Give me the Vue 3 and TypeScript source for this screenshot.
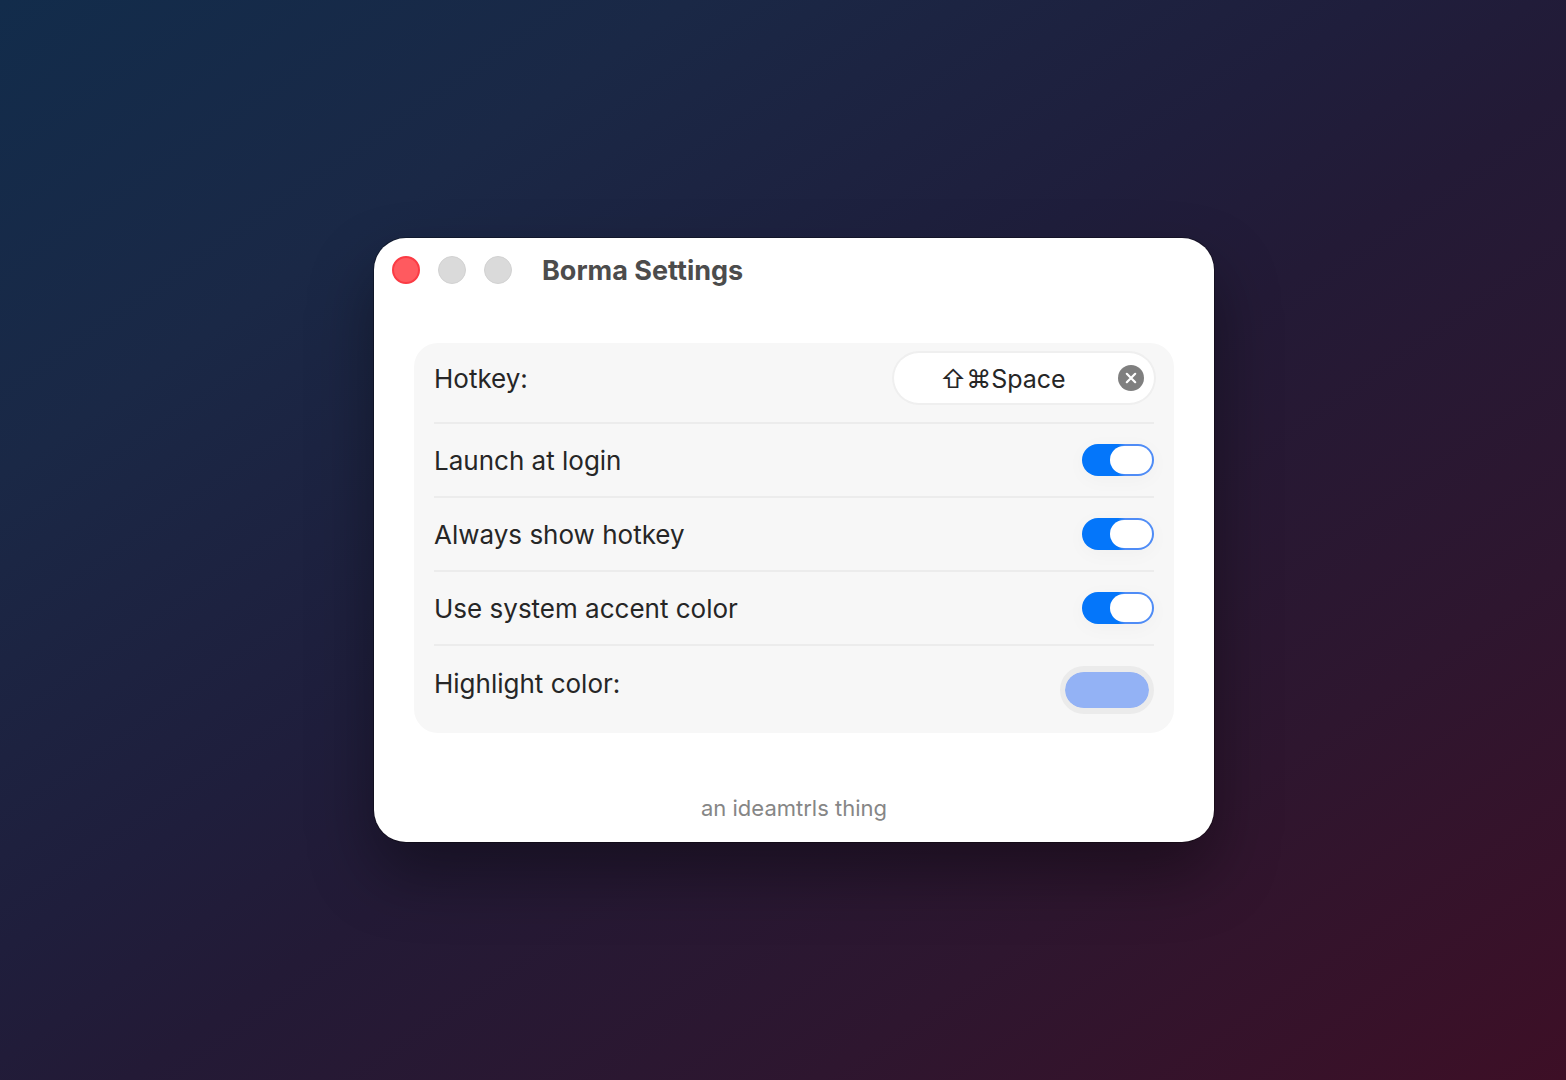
<script setup lang="ts">
import { ref } from 'vue'

interface ToggleSetting {
  id: string
  label: string
  on: boolean
}

const hotkey = ref('⇧⌘Space')
const highlight = ref('#93b2f5')
const toggles = ref<ToggleSetting[]>([
  { id: 'launch', label: 'Launch at login', on: true },
  { id: 'show-hotkey', label: 'Always show hotkey', on: true },
  { id: 'accent', label: 'Use system accent color', on: true },
])
</script>

<template>
  <main class="desktop">
    <section class="window" aria-labelledby="window-title">
      <header class="titlebar">
        <div class="lights">
          <button type="button" class="light close" aria-label="Close"></button>
          <button type="button" class="light" aria-label="Minimize" disabled></button>
          <button type="button" class="light" aria-label="Zoom" disabled></button>
        </div>
        <h1 id="window-title" class="title">Borma Settings</h1>
      </header>

      <form class="card" @submit.prevent>
        <div class="row row-hotkey">
          <label for="hotkey">Hotkey:</label>
          <div class="recorder">
            <input id="hotkey" v-model="hotkey" class="recorder-input" type="text" readonly />
            <button type="button" class="clear" aria-label="Clear hotkey" @click="hotkey = ''">
              <svg viewBox="0 0 26 26" width="26" height="26" aria-hidden="true">
                <circle cx="13" cy="13" r="13" fill="#7f7f7f" />
                <path d="M8.8 8.8l8.4 8.4M17.2 8.8l-8.4 8.4" stroke="#fff" stroke-width="2.2" stroke-linecap="round" />
              </svg>
            </button>
          </div>
        </div>

        <div v-for="item in toggles" :key="item.id" class="row">
          <label :for="item.id">{{ item.label }}</label>
          <input :id="item.id" v-model="item.on" class="switch" type="checkbox" role="switch" />
        </div>

        <div class="row row-color">
          <label for="highlight">Highlight color:</label>
          <input id="highlight" v-model="highlight" class="well" type="color" />
        </div>
      </form>

      <footer class="credit">an ideamtrls thing</footer>
    </section>
  </main>
</template>

<style>
body {
  margin: 0;
}
</style>

<style scoped>
.desktop {
  box-sizing: border-box;
  display: flex;
  align-items: center;
  justify-content: center;
  min-height: 100vh;
  padding: 24px 0 24px 22px;
  font-family: Inter, "Liberation Sans", sans-serif;
  font-size: 26px;
  line-height: 32px;
  color: #262626;
  background: linear-gradient(to bottom right, #122c4b 0%, #1a2846 22%, #1f1e3c 44%, #231a36 54%, #2e162f 76%, #3d0f26 100%);
}

.window {
  box-sizing: border-box;
  width: 100%;
  max-width: 840px;
  border-radius: 32px;
  background: #fff;
  box-shadow:
    0 0 0 1px rgba(0, 0, 0, 0.3),
    0 32px 64px rgba(0, 0, 0, 0.36);
}

.titlebar {
  display: flex;
  align-items: center;
  gap: 30px;
  height: 64px;
  padding: 0 18px;
}

.lights {
  display: flex;
  gap: 18px;
}

.light {
  box-sizing: border-box;
  width: 28px;
  height: 28px;
  padding: 0;
  border: 1px solid #d2d2d2;
  border-radius: 50%;
  background: #dadada;
}

.close {
  border: 2px solid #fb3b44;
  background: #ff5a5f;
}

.title {
  margin: 0;
  padding-top: 2px;
  font-size: 27px;
  font-weight: 700;
  color: #4c4c4c;
}

.card {
  margin: 41px 40px 0;
  padding: 0 20px;
  border-radius: 24px;
  background: #f7f7f7;
}

.row {
  display: flex;
  align-items: center;
  justify-content: space-between;
  box-sizing: border-box;
  height: 74px;
  border-bottom: 2px solid #ececec;
}

.row label {
  padding-top: 2px;
}

.row-hotkey {
  align-items: flex-start;
  height: 81px;
  padding-top: 10px;
}

.row-hotkey label {
  line-height: 48px;
}

.row-color {
  height: 87px;
  border-bottom: 0;
}

.row-color label {
  align-self: flex-start;
  line-height: 72px;
}

.recorder {
  box-sizing: border-box;
  display: flex;
  align-items: center;
  width: 260px;
  height: 50px;
  padding: 0 10px 0 0;
  border-radius: 25px;
  background: #fff;
  box-shadow: 0 0 0 2px #efefef;
}

.recorder-input {
  flex: 1;
  min-width: 0;
  padding: 2px 6px 0 0;
  border: 0;
  outline: 0;
  background: transparent;
  font: inherit;
  font-size: 25px;
  color: inherit;
  text-align: center;
}

.clear {
  display: flex;
  padding: 0;
  border: 0;
  background: none;
}

.switch {
  appearance: none;
  display: flex;
  box-sizing: border-box;
  width: 72px;
  height: 32px;
  margin: 0;
  padding: 2px;
  border-radius: 16px;
  background: #d8d8d8;
}

.switch::before {
  content: "";
  width: 42px;
  height: 28px;
  border-radius: 14px;
  background: #fff;
}

.switch:checked {
  justify-content: flex-end;
  background: linear-gradient(90deg, #0476fa 50%, #4f8cf6 60%);
  box-shadow: 0 4px 20px rgba(0, 0, 0, 0.03);
}

.well {
  appearance: none;
  box-sizing: border-box;
  width: 94px;
  height: 48px;
  margin: 0;
  padding: 0;
  border: solid #ebebeb;
  border-width: 6px 5px;
  border-radius: 24px;
  background: #ebebeb;
}

.well::-webkit-color-swatch-wrapper {
  padding: 0;
}

.well::-webkit-color-swatch {
  border: 0;
  border-radius: 18px;
}

.credit {
  padding: 59px 40px 18px;
  font-size: 22px;
  text-align: center;
  color: #868686;
}
</style>
